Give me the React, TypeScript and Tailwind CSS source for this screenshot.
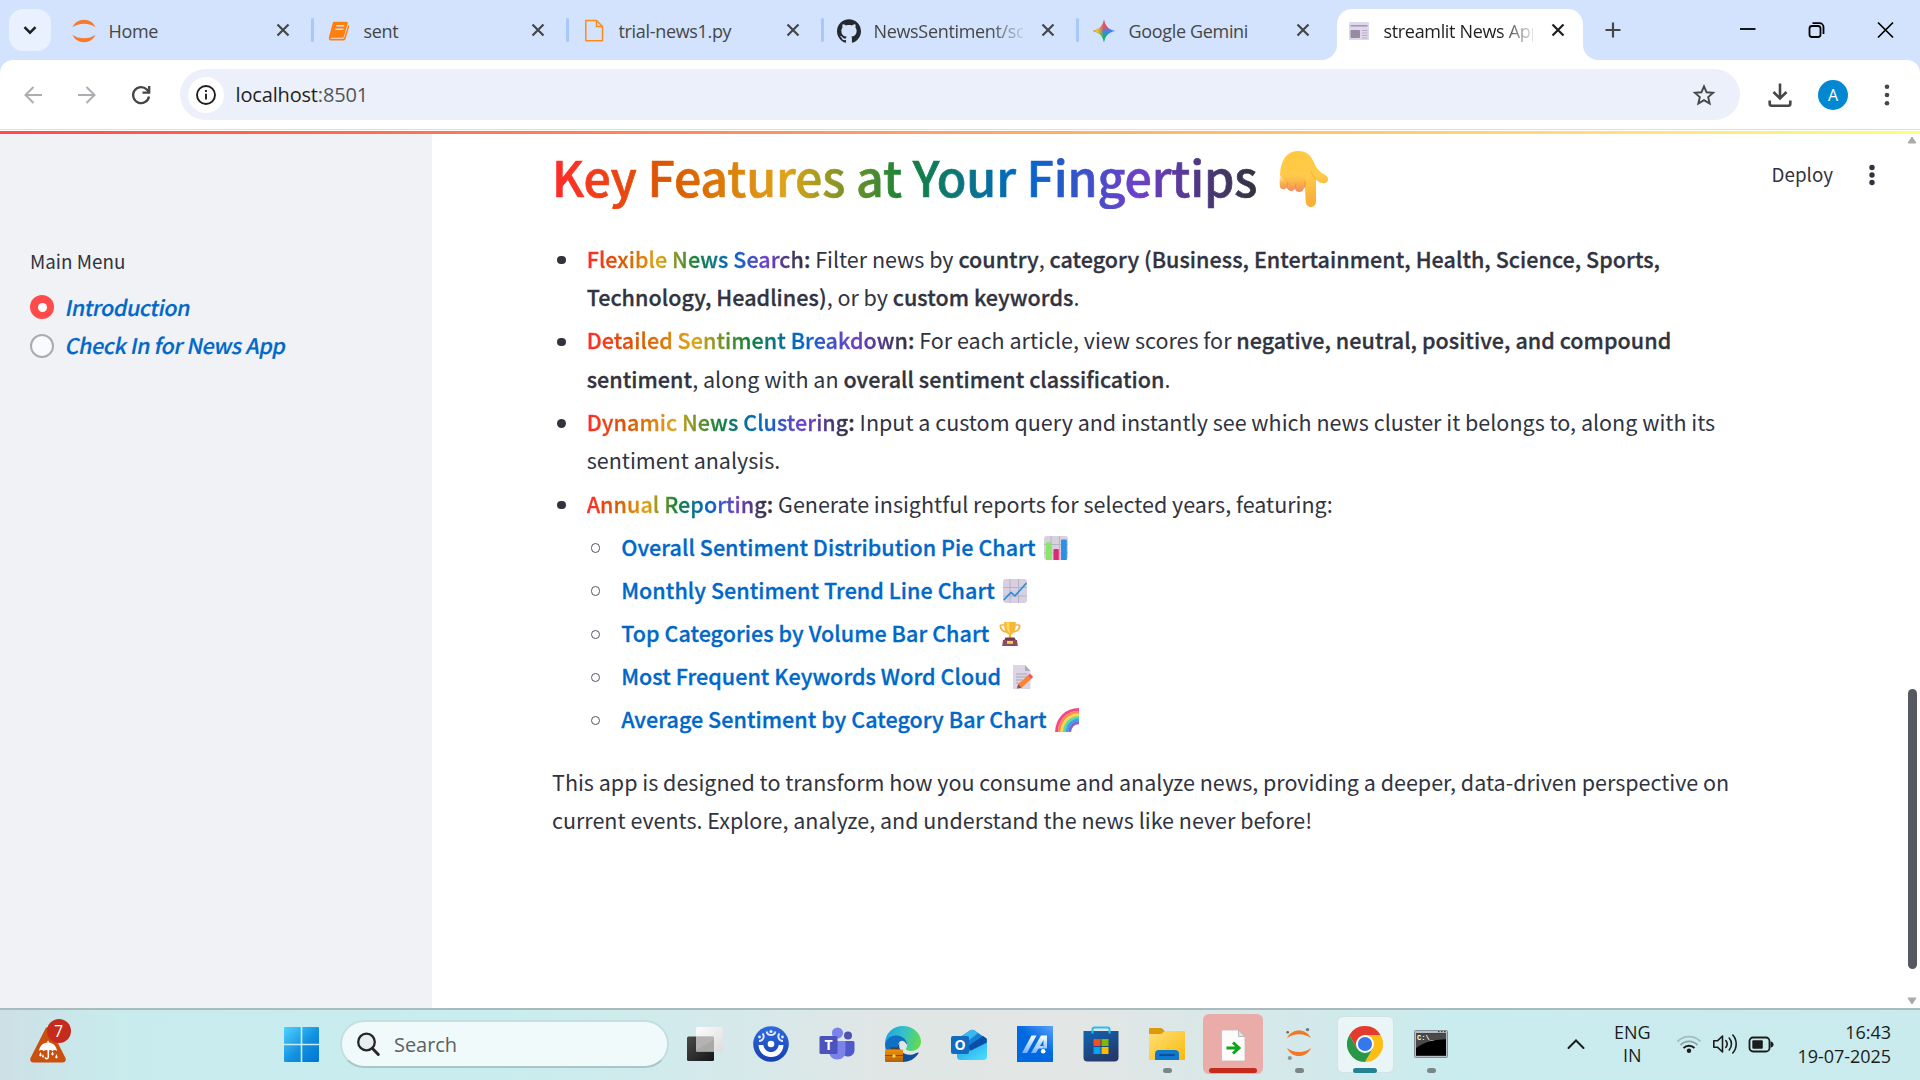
import React from "react";
import type { ReactNode } from "react";
import { SiGithub } from "react-icons/si";

/* ---------- favicons ---------- */

function JupyterArcs({ dots = false }: { dots?: boolean }) {
  return dots ? (
    <svg width="26" height="34" viewBox="0 0 26 34">
      <path d="M1 11C3.500 6 8 3.500 13 3.500S22.500 6 25 11C21.500 8.500 17.500 7.200 13 7.200S4.500 8.500 1 11Z" fill="#f37726" />
      <path d="M1 21C3.500 26.500 8 29 13 29S22.500 26.500 25 21C21.500 23.700 17.500 25 13 25S4.500 23.700 1 21Z" fill="#f37726" />
      <circle cx="1.700" cy="5.300" r="1.300" fill="#616262" />
      <circle cx="21.500" cy="2.600" r="1.700" fill="#767677" />
      <circle cx="3.800" cy="31" r="2.100" fill="#949494" />
    </svg>
  ) : (
    <svg width="24" height="24" viewBox="0 0 24 24">
      <path d="M.6 8.300C2.500 3.600 6.700 .8 12 .8s9.500 2.800 11.400 7.500C20.500 6 16.500 4.700 12 4.700S3.500 6 .6 8.300Z" fill="#f8792a" />
      <path d="M.6 15.700c1.900 4.700 6.100 7.500 11.400 7.500s9.500-2.800 11.400-7.500C20.500 18 16.500 19.300 12 19.300S3.500 18 .6 15.700Z" fill="#f8792a" />
    </svg>
  );
}

function NotebookIcon() {
  return (
    <svg width="22" height="20" viewBox="0 0 22 20">
      <path d="M6 .8h12.500c1 0 1.500.8 1.200 1.700l-3.800 13c-.3.800-1 1.300-1.800 1.300H3.800c-.9 0-1.300.500-1.100 1h11.700c1 0 1.600-.4 1.900-1.300L20.300 4c.8.400 1 1.100.8 1.900l-3.600 12c-.4 1-1.300 1.600-2.300 1.600H3C1.200 19.500.3 17.800 1 15.800L4.800 2C5 1.200 5.300.8 6 .8Z" fill="#ff7f0e" />
      <path d="M8.200 4.800h8M7.300 8.200h8" stroke="#d3e3fd" strokeWidth="1.400" />
    </svg>
  );
}

function FileIcon() {
  return (
    <svg width="20" height="24" viewBox="0 0 20 24" fill="none" stroke="#ff8c1a" strokeWidth="1.500">
      <path d="M1.800 1.500h10.700l6 6v14.300H1.800Z" strokeLinejoin="round" />
      <path d="M12.500 1.500v6h6" />
    </svg>
  );
}

function GeminiIcon() {
  return (
    <svg width="24" height="24" viewBox="0 0 24 24">
      <defs>
        <linearGradient id="gemTop" x1="0.450" y1="0" x2="0.580" y2="0.560">
          <stop offset="0.500" stopColor="#f4504c" />
          <stop offset="1" stopColor="#f4504c" stopOpacity="0" />
        </linearGradient>
        <linearGradient id="gemLeft" x1="0" y1="0.500" x2="0.480" y2="0.500">
          <stop offset="0.450" stopColor="#fbc10e" />
          <stop offset="1" stopColor="#fbc10e" stopOpacity="0" />
        </linearGradient>
        <linearGradient id="gemBottom" x1="0.450" y1="1" x2="0.560" y2="0.500">
          <stop offset="0.450" stopColor="#14b85c" />
          <stop offset="1" stopColor="#14b85c" stopOpacity="0" />
        </linearGradient>
      </defs>
      {["#3186ff", "url(#gemBottom)", "url(#gemTop)", "url(#gemLeft)"].map((fill) => (
        <path key={fill} d="M12 .8c1 6 4.500 10 11.200 11.200C16.500 13.200 13 17.200 12 23.200 11 17.200 7.500 13.200.8 12 7.500 10.800 11 6.800 12 .8Z" fill={fill} />
      ))}
    </svg>
  );
}

function NewspaperIcon() {
  return (
    <svg width="20" height="18" viewBox="0 0 20 18">
      <rect width="20" height="18" rx="1" fill="#e0d7ea" />
      <path d="M1.500 3.800h17" stroke="#a599b1" strokeWidth="1.600" />
      <rect x="1.500" y="8" width="9.500" height="8" rx="1" fill="#968ba3" />
      <path d="M13 8.500h5.500M13 11h5.500M13 13.500h5.500M13 16h5.500" stroke="#b7abc6" strokeWidth="1" />
    </svg>
  );
}

/* ---------- browser chrome ---------- */

type TabInfo = { title: string; icon: ReactNode; active?: boolean; fade?: boolean };

const tabs: TabInfo[] = [
  { title: "Home", icon: <JupyterArcs /> },
  { title: "sent", icon: <NotebookIcon /> },
  { title: "trial-news1.py", icon: <FileIcon /> },
  { title: "NewsSentiment/scr", icon: <SiGithub size={24} color="#24292f" />, fade: true },
  { title: "Google Gemini", icon: <GeminiIcon /> },
  { title: "streamlit News App", icon: <NewspaperIcon />, active: true, fade: true },
];

function CloseIcon({ color }: { color: string }) {
  return (
    <svg width="20" height="20" viewBox="0 0 20 20" fill="none" stroke={color} strokeWidth="2.200">
      <path d="M4.500 4.500l11 11M15.500 4.500l-11 11" />
    </svg>
  );
}

function Tab({ title, icon, active, fade }: TabInfo) {
  return (
    <div className="relative flex h-[60px] w-[255px] shrink-0 items-center">
      {active && (
        <>
          <div className="absolute top-[9px] left-[3px] h-[51px] w-[246px] rounded-t-[15px] bg-white" />
          <svg className="absolute bottom-0 -left-[12px]" width="15" height="15" viewBox="0 0 15 15">
            <path d="M15 0v15H0C8 15 15 8 15 0Z" fill="#fff" />
          </svg>
          <svg className="absolute bottom-0 left-[249px]" width="15" height="15" viewBox="0 0 15 15">
            <path d="M0 0v15h15C7 15 0 8 0 0Z" fill="#fff" />
          </svg>
        </>
      )}
      <span className="relative ml-[13px] flex w-6 justify-center pt-px">{icon}</span>
      <span
        className={
          "relative ml-[12.500px] w-[149px] overflow-hidden pt-px text-[18px] leading-7 tracking-[-0.330px] whitespace-nowrap " +
          (active ? "text-[#1f1f1f] " : "text-[#454746] ") +
          (fade ? "[mask-image:linear-gradient(to_right,black_78%,transparent_103%)]" : "")
        }
      >
        {title}
      </span>
      <span className="relative ml-[15px]">
        <CloseIcon color={active ? "#1f1f1f" : "#454746"} />
      </span>
      {!active && title !== "Google Gemini" && <span className="ml-auto h-6 w-[3px] rounded-full bg-[#a8c7fa]" />}
    </div>
  );
}

function TabStrip() {
  return (
    <div className="flex h-[60px] shrink-0 items-center bg-[#d3e3fd]">
      <div className="ml-[9px] flex h-[42px] w-[42px] shrink-0 items-center justify-center rounded-[14px] bg-[#e9f1fe]">
        <svg width="16" height="16" viewBox="0 0 16 16" fill="none" stroke="#1f1f1f" strokeWidth="2.500">
          <path d="M2.500 5.200L8 10.700l5.500-5.500" />
        </svg>
      </div>
      <div className="ml-2 flex">
        {tabs.map((t) => (
          <Tab key={t.title} {...t} />
        ))}
      </div>
      <svg className="ml-[13.500px]" width="20" height="20" viewBox="0 0 20 20" stroke="#454746" strokeWidth="2.200">
        <path d="M10 2.500v15M2.500 10h15" />
      </svg>
      <div className="ml-auto flex items-center gap-[46px] pr-[25px]">
        <svg width="20" height="20" viewBox="0 0 20 20" stroke="#000" strokeWidth="1.800">
          <path d="M1 9h15.500" />
        </svg>
        <svg width="24" height="20" viewBox="0 0 24 20" fill="none" stroke="#000" strokeWidth="1.800">
          <rect x="4.500" y="6" width="11" height="11" rx="2.500" />
          <path d="M7.500 3.200h7a4 4 0 0 1 4 4V14" />
        </svg>
        <svg width="20" height="20" viewBox="0 0 20 20" stroke="#000" strokeWidth="1.700">
          <path d="M3 2.500l15 15M18 2.500l-15 15" />
        </svg>
      </div>
    </div>
  );
}

function Toolbar() {
  return (
    <div className="h-[69px] shrink-0 bg-[#d3e3fd]">
      <div className="flex h-[69px] items-center rounded-t-[13px] bg-white">
        <svg className="ml-[21px]" width="24" height="24" viewBox="0 0 24 24" fill="none" stroke="#abadb0" strokeWidth="2">
          <path d="M21 12H5M12.500 4L4.500 12l8 8" />
        </svg>
        <svg className="ml-[29.500px]" width="24" height="24" viewBox="0 0 24 24" fill="none" stroke="#abadb0" strokeWidth="2">
          <path d="M3 12h16M11.500 4l8 8-8 8" />
        </svg>
        <svg className="ml-[30.500px]" width="24" height="24" viewBox="0 0 24 24" fill="none" stroke="#454746" strokeWidth="2.300">
          <path d="M20 13.500A8 8 0 1 1 17.800 6.500L20 9" />
          <path d="M20.200 3v6.700h-6.700" />
        </svg>
        <div className="ml-[27px] flex h-[51px] w-[1560px] items-center rounded-full bg-[#ecf0fa]">
          <div className="ml-[8px] flex h-9 w-9 items-center justify-center rounded-full bg-white">
            <svg width="22" height="22" viewBox="0 0 22 22" fill="none" stroke="#1f1f1f" strokeWidth="1.900">
              <circle cx="11" cy="11" r="9" />
              <path d="M11 9.800v5.700M11 6v2" />
            </svg>
          </div>
          <span className="ml-[11.500px] text-[20px] leading-7 tracking-[-0.160px] text-[#1f1f1f]">
            localhost<span className="text-[#51555a]">:8501</span>
          </span>
          <svg className="mr-[24px] ml-auto" width="24" height="24" viewBox="0 0 24 24" fill="none" stroke="#454746" strokeWidth="1.900">
            <path d="M12 3.300l2.600 6 6.500.55-4.900 4.300 1.450 6.350L12 17.100 6.350 20.500 7.800 14.150 2.900 9.850l6.500-.55Z" />
          </svg>
        </div>
        <svg className="ml-7" width="24" height="26" viewBox="0 0 24 26" fill="none" stroke="#454746" strokeWidth="2.600">
          <path d="M12 1.500v14M5.500 10L12 16.500 18.500 10M1.700 18.500v3.300a2 2 0 0 0 2 2h16.600a2 2 0 0 0 2-2v-3.300" />
        </svg>
        <div className="ml-[26px] flex h-[30px] w-[30px] items-center justify-center rounded-full bg-[#0288d1] text-[16px] text-white">A</div>
        <svg className="ml-[33px]" width="12" height="24" viewBox="0 0 12 24" fill="#454746">
          <circle cx="6" cy="3.800" r="2.300" />
          <circle cx="6" cy="12" r="2.300" />
          <circle cx="6" cy="20.200" r="2.300" />
        </svg>
      </div>
    </div>
  );
}

/* ---------- emoji drawings ---------- */

function PointingDown() {
  return (
    <svg width="50" height="58" viewBox="0 0 50 58">
      <defs>
        <linearGradient id="handFill" x1="0" y1="0" x2="0.200" y2="1">
          <stop offset="0" stopColor="#ffc83d" />
          <stop offset="0.550" stopColor="#ffcb4c" />
          <stop offset="1" stopColor="#f9ae35" />
        </linearGradient>
        <linearGradient id="fingers" x1="0" y1="0" x2="0" y2="1">
          <stop offset="0" stopColor="#ffc94a" stopOpacity="0" />
          <stop offset="0.550" stopColor="#fbb14a" />
          <stop offset="1" stopColor="#f08a62" />
        </linearGradient>
      </defs>
      <path d="M1 25C1.500 10 8 1 18.500 1c9.500 0 13.500 4.500 17 12.500 2.300 5.300 4.500 8 10 11 4 2.200 4.500 5.500 2.500 7.500-2.300 2.300-7 1.500-11-2.300V51c0 3.500-2 6-5 6s-5.300-2.500-5.300-6L26 36H9Z" fill="url(#handFill)" />
      <path d="M1 24c-.3 5-.6 10.500.1 13.300.8 2.600 5.600 2.600 6.700.2.700 4 6.700 4.700 8 1.200 1.200 4.200 8 4.500 8.700.3l1.900-2V22Z" fill="url(#fingers)" />
      <path d="M9 31.500l-1.400 6.300M17.200 33l-1.600 6M26 31v6" stroke="#e98a4d" strokeWidth="1" opacity=".7" />
      <path d="M37 29.500c-2.500-2.300-4-5-5-8" stroke="#f3a52e" strokeWidth="1.200" fill="none" opacity=".55" />
    </svg>
  );
}

function ChartGrid({ children }: { children: ReactNode }) {
  return (
    <svg width="24" height="24" viewBox="0 0 24 24">
      <rect width="24" height="24" rx="3" fill="#d7d0e0" />
      <path d="M7 0v24M15.500 0v24M0 8.500h24M0 17h24" stroke="#bab1c7" strokeWidth="1" />
      {children}
    </svg>
  );
}

function BarChartEmoji() {
  return (
    <ChartGrid>
      <path d="M2 7.500a1.200 1.200 0 0 1 1.200-1.200h2.900a1.200 1.200 0 0 1 1.200 1.200V24H2Z" fill="#8ae468" />
      <path d="M9.500 14.200a1.200 1.200 0 0 1 1.200-1.200h2.900a1.200 1.200 0 0 1 1.200 1.200V24H9.500Z" fill="#dc2a72" />
      <path d="M17 4.700a1.200 1.200 0 0 1 1.200-1.200h3.400a1.200 1.200 0 0 1 1.200 1.200V24H17Z" fill="#2d8fe3" />
    </ChartGrid>
  );
}

function LineChartEmoji() {
  return (
    <ChartGrid>
      <path d="M.8 21L8 13.500l4 3.300L23.500 4" fill="none" stroke="#2c8fd8" strokeWidth="1.700" />
    </ChartGrid>
  );
}

function TrophyEmoji() {
  return (
    <svg width="24" height="24" viewBox="0 0 24 24">
      <path d="M7 3H3.500c-.8 0-1.200.5-1.100 1.300C2.800 7.500 4.500 9.300 8.500 10M17 3h3.500c.8 0 1.200.5 1.100 1.300-.4 3.200-2.100 5-6.100 5.700" fill="none" stroke="#f3b13c" strokeWidth="1.700" />
      <path d="M6.200 0h11.600c.4 6.500-1.200 11.300-4.600 12.500V16h-2.400v-3.500C7.400 11.300 5.800 6.500 6.200 0Z" fill="#f9b73a" />
      <path d="M8.500.5h3c-.5 4-.2 7.500 1 11C9.500 10 8.300 6 8.500.5Z" fill="#ffd95a" />
      <path d="M7.500 15.500h9l1.500 3H6Z" fill="#6d3a48" />
      <path d="M5 18h14l.8 6H4.200Z" fill="#8a4d5c" />
      <rect x="9" y="19" width="6" height="2.800" fill="#f7cf5b" />
    </svg>
  );
}

function MemoEmoji() {
  return (
    <svg width="24" height="24" viewBox="0 0 24 24">
      <path d="M3 0h12l5.500 6V24H3Z" fill="#dcd5e5" />
      <path d="M15 0v6h5.500Z" fill="#b3a9c0" />
      <path d="M6 9h11M6 12h11M6 15h7M6 18h5" stroke="#aca1ba" strokeWidth="1.100" />
      <path d="M7 23.500l1.200-4.300 9.300-8.400 3.300 3.400-9.300 8.600Z" fill="#fc8333" />
      <path d="M7 23.500l1.200-4.300 3.300 3.600Z" fill="#7c5560" />
      <path d="M17.500 10.800l1.700-1.600c.5-.4 1-.4 1.400 0l2 2.100c.4.500.4 1 0 1.400l-1.800 1.500Z" fill="#f85a4a" />
    </svg>
  );
}

function RainbowEmoji() {
  return (
    <svg width="24" height="24" viewBox="0 0 24 24" fill="none" strokeWidth="2.900">
      <path d="M1.500 24C2 11 11 1.500 24 1.500" stroke="#f5468b" />
      <path d="M4.200 24C4.700 12.500 12.500 4.200 24 4.200" stroke="#ff8a4d" />
      <path d="M6.800 24C7.300 14 14 6.800 24 6.800" stroke="#fdd454" />
      <path d="M9.400 24C9.900 15.500 15.500 9.400 24 9.400" stroke="#5fd99a" />
      <path d="M12 24C12.500 17 17 12 24 12" stroke="#3ea0ec" />
      <path d="M14.700 24C15.200 18.500 18.500 14.700 24 14.700" stroke="#8566d0" />
    </svg>
  );
}

/* ---------- streamlit page ---------- */

const rainbow =
  "bg-[linear-gradient(to_right,#ff2b2b,#d95a00,#dfa418,#158237,#0068c9,#6f3fc8,#31333f)] bg-clip-text text-transparent";

function B({ children }: { children: ReactNode }) {
  return <strong className="font-medium tracking-[0.050px] [-webkit-text-stroke:0.300px_currentColor]">{children}</strong>;
}

function Rainbow({ children }: { children: ReactNode }) {
  return (
    <strong className="font-medium tracking-[0.050px] [-webkit-text-stroke:0.300px_currentColor]">
      <span className={rainbow}>{children}</span>:
    </strong>
  );
}

function Line({ children }: { children: ReactNode }) {
  return <div className="h-[38.400px] leading-[38.400px] whitespace-nowrap">{children}</div>;
}

function Bullet({ children }: { children: ReactNode }) {
  return (
    <li className="flex">
      <span className="mt-[16.200px] mr-[21px] ml-[5.200px] h-[8.500px] w-[8.500px] shrink-0 rounded-full bg-[#31333f]" />
      <div>{children}</div>
    </li>
  );
}

function Report({ label, emoji }: { label: string; emoji: ReactNode }) {
  return (
    <li className="flex">
      <span className="mt-[15.500px] mr-[21px] ml-[4px] h-[9.500px] w-[9.500px] shrink-0 rounded-full border-[1.500px] border-[#53555f]" />
      <div className="flex h-[38.400px] leading-[38.400px] whitespace-nowrap text-[#0068c9]">
        <B>{label}</B>
        <span className="ml-[8.500px] flex h-[38.400px] items-center pt-[1.500px]">{emoji}</span>
      </div>
    </li>
  );
}

function Radio({ label, checked, spacing }: { label: string; checked?: boolean; spacing: string }) {
  return (
    <div className="flex h-[38.400px] items-center">
      {checked ? (
        <span className="flex h-6 w-6 items-center justify-center rounded-full bg-[#ff4b4b]">
          <span className="h-[9px] w-[9px] rounded-full bg-white" />
        </span>
      ) : (
        <span className="h-6 w-6 rounded-full border-2 border-[#a9abb3] bg-[#f9fafc]" />
      )}
      <span className={"ml-[11px] inline-block origin-[50%_65%] -skew-x-[11deg] text-[21.500px] leading-[38.400px] font-medium text-[#0068c9] [-webkit-text-stroke:0.200px_currentColor] " + spacing}>
        {label}
      </span>
    </div>
  );
}

function Sidebar() {
  return (
    <aside className="h-full w-[432px] shrink-0 bg-[#f0f2f6] pl-[30px] text-[#31333f]">
      <div className="pt-[111px] text-[18.800px] leading-[31px] tracking-[0.020px]">Main Menu</div>
      <div className="pt-[12px]">
        <Radio label="Introduction" checked spacing="tracking-[-0.400px]" />
        <Radio label="Check In for News App" spacing="tracking-[-0.380px]" />
      </div>
    </aside>
  );
}

function Page() {
  return (
    <main className="relative h-full flex-1 overflow-hidden bg-white pl-[120px] text-[21.500px] text-[#31333f]">
      <div className="absolute top-[24px] right-[25px] flex items-center">
        <span className="text-[18.800px] leading-[31px]">Deploy</span>
        <svg className="mt-[3px] ml-[33px]" width="13" height="24" viewBox="0 0 13 24" fill="#31333f">
          <circle cx="6" cy="4.500" r="2.700" />
          <circle cx="6" cy="12" r="2.700" />
          <circle cx="6" cy="19.500" r="2.700" />
        </svg>
      </div>

      <h2 className="mt-[10px] flex h-[64.800px] items-center text-[48.300px] leading-[64.800px] font-medium tracking-[-0.130px] [-webkit-text-stroke:0.700px_currentColor]">
        <span className={rainbow}>Key Features at Your Fingertips</span>
        <span className="ml-[22px] pt-[5px]">
          <PointingDown />
        </span>
      </h2>

      <ul className="mt-[31px] flex flex-col gap-[4.800px]">
        <Bullet>
          <Line>
            <Rainbow>Flexible News Search</Rainbow> Filter news by <B>country</B>, <B>category (Business, Entertainment, Health, Science, Sports,</B>
          </Line>
          <Line>
            <B>Technology, Headlines)</B>, or by <B>custom keywords</B>.
          </Line>
        </Bullet>
        <Bullet>
          <Line>
            <Rainbow>Detailed Sentiment Breakdown</Rainbow> For each article, view scores for <B>negative, neutral, positive, and compound</B>
          </Line>
          <Line>
            <B>sentiment</B>, along with an <B>overall sentiment classification</B>.
          </Line>
        </Bullet>
        <Bullet>
          <Line>
            <Rainbow>Dynamic News Clustering</Rainbow> Input a custom query and instantly see which news cluster it belongs to, along with its
          </Line>
          <Line>sentiment analysis.</Line>
        </Bullet>
        <Bullet>
          <Line>
            <Rainbow>Annual Reporting</Rainbow> Generate insightful reports for selected years, featuring:
          </Line>
          <ul className="mt-[4.800px] flex flex-col gap-[4.800px]">
            <Report label="Overall Sentiment Distribution Pie Chart" emoji={<BarChartEmoji />} />
            <Report label="Monthly Sentiment Trend Line Chart" emoji={<LineChartEmoji />} />
            <Report label="Top Categories by Volume Bar Chart" emoji={<TrophyEmoji />} />
            <Report label="Most Frequent Keywords Word Cloud" emoji={<MemoEmoji />} />
            <Report label="Average Sentiment by Category Bar Chart" emoji={<RainbowEmoji />} />
          </ul>
        </Bullet>
      </ul>

      <div className="mt-6">
        <Line>This app is designed to transform how you consume and analyze news, providing a deeper, data-driven perspective on</Line>
        <Line>current events. Explore, analyze, and understand the news like never before!</Line>
      </div>
    </main>
  );
}

function Scrollbar() {
  return (
    <div className="flex h-full w-4 shrink-0 flex-col items-center bg-white">
      <svg className="mt-[2px]" width="10" height="8" viewBox="0 0 10 8">
        <path d="M5 1L9 7H1Z" fill="#a9a9ac" stroke="#a9a9ac" strokeLinejoin="round" />
      </svg>
      <div className="mt-[544.500px] h-[280px] w-[9px] rounded-full bg-[#56595f]" />
      <svg className="mt-[28.500px]" width="10" height="8" viewBox="0 0 10 8">
        <path d="M5 7L9 1H1Z" fill="#a9a9ac" stroke="#a9a9ac" strokeLinejoin="round" />
      </svg>
    </div>
  );
}

/* ---------- taskbar ---------- */

function WeatherAlert() {
  return (
    <div className="relative ml-[30px] h-[42px] w-[44px]">
      <svg className="absolute top-[3px] left-0" width="37" height="37" viewBox="0 0 37 37">
        <path d="M15.500 2.500c1-2 4-2 5 0L35.500 32c1 2.500-.5 4.500-3 4.500h-29C1 36.500-.5 34.500.5 32Z" fill="#c9500e" />
        <path d="M9 25c.5-5 4-8 8.500-8.500v-1.800h1.200v1.800C23.500 17 26.500 20.500 27 25c-1.500-1.300-3-1.300-4.500 0-1.300-1.300-2.800-1.300-4.200 0-1.500-1.300-3-1.300-4.500 0-1.600-1.300-3.200-1.300-4.800 0Z" fill="#fff" />
        <path d="M18.300 24v7c0 2.200-3 2.200-3 .2" fill="none" stroke="#fff" strokeWidth="1.500" />
        <path d="M10.500 26l1 2.500a1.200 1.200 0 1 1-2 0ZM13 28l.8 2a1 1 0 1 1-1.600 0ZM22.500 25.500l1 2a1.200 1.200 0 1 1-2 0ZM26.500 28l.9 2.500a1.200 1.200 0 1 1-1.900 0Z" fill="#fff" />
      </svg>
      <span className="absolute -top-[4px] left-[16.500px] flex h-6 w-6 items-center justify-center rounded-full bg-[#c42b1c] text-[16px] leading-none text-white">7</span>
    </div>
  );
}

function WindowsLogo() {
  return (
    <svg className="ml-[210px]" width="35" height="35" viewBox="0 0 35 35">
      <defs>
        <linearGradient id="winFill" x1="0" y1="0" x2="35" y2="35" gradientUnits="userSpaceOnUse">
          <stop offset="0" stopColor="#4fd2ff" />
          <stop offset="0.550" stopColor="#1290e0" />
          <stop offset="1" stopColor="#0074d4" />
        </linearGradient>
      </defs>
      <path d="M1 0h15.700v16.700H0V1a1 1 0 0 1 1-1ZM18.300 0H34a1 1 0 0 1 1 1v15.700H18.300ZM0 18.300h16.700V35H1a1 1 0 0 1-1-1ZM18.300 18.300H35V34a1 1 0 0 1-1 1H18.300Z" fill="url(#winFill)" />
    </svg>
  );
}

function TaskViewIcon() {
  return (
    <svg width="36" height="36" viewBox="0 0 36 36">
      <defs>
        <linearGradient id="tvDark" x1="0" y1="0" x2="1" y2="1">
          <stop offset="0" stopColor="#4a4a4a" />
          <stop offset="1" stopColor="#151515" />
        </linearGradient>
        <linearGradient id="tvLight" x1="0" y1="0" x2="1" y2="1">
          <stop offset="0" stopColor="#fdfdfd" />
          <stop offset="1" stopColor="#dcdcdc" />
        </linearGradient>
      </defs>
      <rect x="0" y="10.500" width="27" height="24.500" rx="1.500" fill="url(#tvDark)" />
      <rect x="9" y="1" width="27" height="24.500" rx="1.500" fill="url(#tvLight)" />
      <path d="M9 10.500h16.500a1.500 1.500 0 0 1 1.500 1.500v13.500H9Z" fill="#a9a9a9" />
      <path d="M9 10.500h18v3L9 24Z" fill="#bdbdbd" opacity=".5" />
    </svg>
  );
}

function SupportIcon() {
  return (
    <svg width="36" height="36" viewBox="0 0 36 36">
      <defs>
        <linearGradient id="supFill" x1="0" y1="0" x2="0" y2="1">
          <stop offset="0" stopColor="#2d6be0" />
          <stop offset="1" stopColor="#173fb0" />
        </linearGradient>
      </defs>
      <circle cx="18" cy="18" r="17.800" fill="url(#supFill)" />
      <path d="M5.500 19h4.800c.8 4.300 3.700 7 7.700 7s6.900-2.700 7.700-7h4.800C30 26.500 25 31 18 31S6 26.500 5.500 19Z" fill="#fff" />
      <circle cx="18" cy="18" r="3.300" fill="#fff" />
      <g fill="none" stroke="#dfe9ff" strokeWidth="1.900">
        <path d="M13.600 5.500a4.500 4.500 0 0 0 8.800 0" />
        <path d="M9.500 7.500a4.500 4.500 0 0 1-3.500 7.500" />
        <path d="M26.500 7.500a4.500 4.500 0 0 0 3.500 7.500" />
      </g>
      <g fill="#dfe9ff">
        <circle cx="18" cy="5.500" r="1.600" />
        <circle cx="6.500" cy="11" r="1.400" />
        <circle cx="29.500" cy="11" r="1.400" />
      </g>
    </svg>
  );
}

function TeamsIcon() {
  return (
    <span className="relative">
      <svg width="36" height="34" viewBox="0 0 36 34">
        <circle cx="29" cy="8.500" r="4" fill="#4f52b2" />
        <circle cx="18.500" cy="6" r="5.600" fill="#7b83eb" />
        <path d="M23 14h11a1.500 1.500 0 0 1 1.500 1.500V23c0 4-3 6.500-6.500 6.500S22 27 22 23Z" fill="#5059c9" />
        <path d="M10 14h16.500v10c0 5-3.500 8.500-8.200 8.500S10 29 10 24Z" fill="#7b83eb" />
        <rect x=".5" y="9" width="18" height="18" rx="1.500" fill="#4b53bc" />
      </svg>
      <span className="absolute top-[9px] left-[.5px] w-[18px] text-center text-[14px] leading-[18px] font-bold text-white">T</span>
    </span>
  );
}

function EdgeIcon() {
  return (
    <svg width="36" height="36" viewBox="0 0 36 36">
      <defs>
        <linearGradient id="edgeTop" x1="0" y1="0.300" x2="1" y2="0.500">
          <stop offset="0" stopColor="#1fa2e2" />
          <stop offset="0.500" stopColor="#35c1c8" />
          <stop offset="1" stopColor="#62dc4c" />
        </linearGradient>
        <linearGradient id="edgeCase" x1="0" y1="0" x2="0" y2="1">
          <stop offset="0" stopColor="#f0920c" />
          <stop offset="1" stopColor="#b4600a" />
        </linearGradient>
      </defs>
      <path d="M0 18C0 7 8 0 18 0s18 7.500 18 15.500c0 6-5 9.500-9.500 9.500-3.500 0-6-1-5.500-2.500.3-.8 1.300-1.500 1-4C21.500 14 17 10 11 10 5 10 1 14 0 18Z" fill="url(#edgeTop)" />
      <path d="M0 18c1-4.500 5-8.500 11-8.500 5.500 0 10 3 11 8l-.5 1C20 15.500 17 13.500 14.500 16c-3.500 4-2 12 5 17l-3 3C7 36 0 28.500 0 18Z" fill="#0f6fc5" />
      <path d="M14.500 17c-2 7 5 13.500 13 11.500 2.500-.6 4.500-1.800 5.500-2 .7 0 .8.500.4 1.100C29.500 33.500 24 36 18 36c-6-3-9-13-3.500-19Z" fill="#114f96" />
      <path d="M6.500 23v-1h5v1" fill="none" stroke="#5d3a10" strokeWidth="1.500" />
      <rect x="0" y="23.500" width="18" height="12.500" rx="1" fill="url(#edgeCase)" />
      <path d="M0 29.500h18" stroke="#8e4a06" strokeWidth="1" />
      <circle cx="9" cy="30" r="1.700" fill="#ffd24a" />
    </svg>
  );
}

function OutlookIcon() {
  return (
    <span className="relative">
      <svg width="36" height="34" viewBox="0 0 36 34">
        <defs>
          <linearGradient id="outFront" x1="0" y1="0" x2="1" y2="1">
            <stop offset="0" stopColor="#1f9de6" />
            <stop offset="1" stopColor="#4de0ff" />
          </linearGradient>
        </defs>
        <path d="M6 12L19 3.500c1.500-1 3-1 4.500 0L36 12v16H6Z" fill="#1580d6" />
        <path d="M14 7L19 3.500c1.500-1 3-1 4.500 0L27 6 12 18 7 12Z" fill="#3ab8f2" />
        <path d="M17 19L32 9l3.500 2.500v5L20 25Z" fill="#0b4ea8" />
        <path d="M36 15.500v14a3.500 3.500 0 0 1-3.500 3.500H9.500A3.500 3.500 0 0 1 6 29.500V25L20 23.500Z" fill="url(#outFront)" />
        <rect x="0" y="9" width="18" height="18" rx="2" fill="#0f6cc0" />
      </svg>
      <span className="absolute top-[9px] left-0 w-[18px] text-center text-[14px] leading-[18px] font-bold text-white">O</span>
    </span>
  );
}

function MyAsusIcon() {
  return (
    <svg width="36" height="36" viewBox="0 0 36 36">
      <defs>
        <linearGradient id="asusBg" x1="0.600" y1="0.500" x2="1" y2="0">
          <stop offset="0" stopColor="#0069e0" />
          <stop offset="1" stopColor="#5aa2fb" />
        </linearGradient>
        <linearGradient id="asusInk" x1="0" y1="1" x2="0" y2="0">
          <stop offset="0" stopColor="#6fb0ff" />
          <stop offset="1" stopColor="#fff" />
        </linearGradient>
      </defs>
      <rect width="36" height="36" fill="url(#asusBg)" />
      <path d="M5 27L14.500 9.500H19.500L10 27ZM14 27L24 9.500H30V22.500H26.500V14L19 27Z" fill="url(#asusInk)" />
      <path d="M20 20h6.500v2.500h-8Z" fill="#b8d6ff" />
      <circle cx="26.200" cy="25.300" r="2.300" fill="#fff" />
    </svg>
  );
}

function StoreIcon() {
  return (
    <svg width="36" height="36" viewBox="0 0 36 36">
      <defs>
        <linearGradient id="storeBg" x1="0" y1="0" x2="0.500" y2="1">
          <stop offset="0" stopColor="#0f64b4" />
          <stop offset="1" stopColor="#243a6a" />
        </linearGradient>
      </defs>
      <path d="M9.500 8V3.200A1.700 1.700 0 0 1 11.200 1.500H24.800A1.700 1.700 0 0 1 26.500 3.200V8" fill="none" stroke="#29bdf6" strokeWidth="2" />
      <path d="M.5 5h35v26.500a4 4 0 0 1-4 4h-27a4 4 0 0 1-4-4Z" fill="url(#storeBg)" />
      <path d="M9.500 5v2.500M26.500 5v2.500" stroke="#29bdf6" strokeWidth="2" />
      <path d="M10.500 13h7v7h-7Z" fill="#f25022" />
      <path d="M18.500 13h7v7h-7Z" fill="#7fba00" />
      <path d="M10.500 21h7v7h-7Z" fill="#00a4ef" />
      <path d="M18.500 21h7v7h-7Z" fill="#ffb900" />
    </svg>
  );
}

function ExplorerIcon() {
  return (
    <svg width="36" height="34" viewBox="0 0 36 34">
      <defs>
        <linearGradient id="folderFront" x1="0" y1="0" x2="1" y2="1">
          <stop offset="0" stopColor="#ffe07a" />
          <stop offset="1" stopColor="#fbb90c" />
        </linearGradient>
      </defs>
      <path d="M1 1h10.500c1 0 1.700.4 2.300 1L16 4.500V9H0V2a1 1 0 0 1 1-1Z" fill="#dc9a07" />
      <path d="M0 7h11c1 0 1.800-.4 2.500-1l1-1c.7-.7 1.500-1 2.500-1h18a1 1 0 0 1 1 1v28H0Z" fill="url(#folderFront)" />
      <path d="M6 33v-6a4 4 0 0 1 4-4h16a4 4 0 0 1 4 4v6Z" fill="#0f78cf" />
      <path d="M11 28h14" stroke="#0a4f94" strokeWidth="1.800" strokeLinecap="round" />
    </svg>
  );
}

function FileArrowIcon() {
  return (
    <svg width="36" height="36" viewBox="0 0 36 36">
      <path d="M6.500 4h17l6.500 6.500V35H6.500Z" fill="#fcfcfc" stroke="#c9b6b4" strokeWidth=".8" />
      <path d="M23.500 4v6.500H30Z" fill="#e2e2e2" stroke="#a9a9a9" strokeWidth=".8" />
      <path d="M11.500 22h12M18 16.500l6 5.500-6 5.500" fill="none" stroke="#09a51b" strokeWidth="3" />
    </svg>
  );
}

function ChromeIcon() {
  return (
    <svg width="36" height="36" viewBox="0 0 36 36">
      <path d="M18 9H33.590A18 18 0 0 1 18 36L25.790 22.500Z" fill="#fdbd14" />
      <path d="M2.410 9A18 18 0 0 0 18 36L25.790 22.500H10.210Z" fill="#2a9647" />
      <path d="M10.210 22.500L2.410 9A18 18 0 0 1 33.590 9H18Z" fill="#e33b2e" />
      <circle cx="18" cy="18" r="9" fill="#fff" />
      <circle cx="18" cy="18" r="7.100" fill="#3478ee" />
    </svg>
  );
}

function TerminalIcon() {
  return (
    <span className="relative flex">
      <svg width="34" height="28" viewBox="0 0 34 28">
        <rect x=".5" y=".5" width="33" height="27" rx="1" fill="#b9bec6" stroke="#868a92" />
        <path d="M24 1.700h1.500M27 1.700h1.500M30 1.700h1.500" stroke="#3a3d46" strokeWidth="1.200" />
        <rect x="2" y="3.200" width="30" height="22.600" fill="#000" />
        <path d="M2 3.200h30v6C20 9.500 10 12 2 18Z" fill="#4a4a4a" />
      </svg>
      <span className="absolute top-[4px] left-[3px] font-['Liberation_Mono'] text-[7px] leading-[8px] font-bold text-white">C:\_</span>
    </span>
  );
}

function TaskItem({ children, tile = "", bar = "" }: { children: ReactNode; tile?: string; bar?: string }) {
  return (
    <div className="flex h-full w-[66px] shrink-0 items-center justify-center">
      <div className={"relative flex items-center justify-center " + (tile || "h-[60px] w-[60px]")}>
        {children}
        {bar && <span className={"absolute rounded-full " + bar} />}
      </div>
    </div>
  );
}

function Taskbar() {
  return (
    <footer className="flex h-[72px] shrink-0 items-center border-t-2 border-[#a9bcbd] bg-[linear-gradient(to_right,#cce0e6_0,#c8eced_130px,#c9edee_500px,#d2eaec_680px,#e0e6e5_880px,#e2e6e4_1080px,#d5e8ea_1280px,#c9ecee_1450px,#c9ebed_1920px)] pb-[2px] text-[#1c1c1c]">
      <WeatherAlert />
      <WindowsLogo />
      <div className="ml-[20.500px] flex h-[48px] w-[329px] items-center rounded-full border-2 border-[#c3dfe1] border-b-[#aac6c8] bg-[#f0fafb]">
        <svg className="ml-[14px]" width="24" height="24" viewBox="0 0 24 24" fill="none" stroke="#262626" strokeWidth="2.300">
          <circle cx="10.500" cy="10" r="8.300" fill="#e6eeee" />
          <path d="M16.500 16.500l5.800 6" strokeWidth="2.900" strokeLinecap="round" />
        </svg>
        <span className="ml-[14.500px] pt-px text-[20px] leading-7 tracking-[-0.050px] text-[#5b6162]">Search</span>
      </div>
      <div className="ml-[3.500px] flex h-full">
        <TaskItem><TaskViewIcon /></TaskItem>
        <TaskItem><SupportIcon /></TaskItem>
        <TaskItem><TeamsIcon /></TaskItem>
        <TaskItem><EdgeIcon /></TaskItem>
        <TaskItem><OutlookIcon /></TaskItem>
        <TaskItem><MyAsusIcon /></TaskItem>
        <TaskItem><StoreIcon /></TaskItem>
        <TaskItem bar="bottom-px h-[5px] w-[9px] bg-[#7d8686]"><ExplorerIcon /></TaskItem>
        <TaskItem tile="h-[60px] w-[60px] rounded-[6px] bg-[#e9aca9]" bar="bottom-px h-[5px] w-12 bg-[#c42b1c]"><FileArrowIcon /></TaskItem>
        <TaskItem bar="bottom-px h-[5px] w-[9px] bg-[#7d8686]"><JupyterArcs dots /></TaskItem>
        <TaskItem tile="h-[57px] w-[57px] rounded-[6px] border border-[#d3e2e3] bg-[#e9f5f7]" bar="-bottom-[1.500px] h-[5px] w-6 bg-[#258292]"><ChromeIcon /></TaskItem>
        <TaskItem bar="bottom-px h-[5px] w-[9px] bg-[#7d8686]"><TerminalIcon /></TaskItem>
      </div>

      <div className="ml-auto flex h-full items-center pr-[29px]">
        <svg width="18" height="12" viewBox="0 0 18 12" fill="none" stroke="#1c1c1c" strokeWidth="2">
          <path d="M1.500 10L9 2.500l7.500 7.500" strokeLinecap="round" />
        </svg>
        <div className="ml-[27px] w-[40px] text-center text-[18px] leading-[23px]">
          <div>ENG</div>
          <div>IN</div>
        </div>
        <svg className="ml-[24px]" width="26" height="20" viewBox="0 0 26 20" fill="none" strokeWidth="1.800">
          <path d="M1.500 7.500a16 16 0 0 1 23 0" stroke="#a3bcbe" />
          <path d="M4.500 11a12 12 0 0 1 17 0" stroke="#8aa2a4" />
          <path d="M7.500 14a7.800 7.800 0 0 1 11 0" stroke="#1c1c1c" />
          <circle cx="13" cy="16.800" r="2.200" fill="#1c1c1c" />
        </svg>
        <svg className="ml-[10px]" width="26" height="22" viewBox="0 0 26 22" fill="none" stroke="#1c1c1c" strokeWidth="1.600">
          <path d="M1.800 7.800h3.600L10.500 3v16l-5.100-4.800H1.800Z" strokeLinejoin="round" />
          <path d="M13.800 7.500c1.600 2 1.600 5 0 7M17.200 5c3 3.500 3 8.500 0 12M20.800 2c4.500 5 4.500 13 0 18" strokeLinecap="round" />
        </svg>
        <svg className="ml-[10px]" width="26" height="17" viewBox="0 0 26 17">
          <rect x="1.500" y="1.500" width="20" height="14" rx="3.500" fill="none" stroke="#1c1c1c" strokeWidth="1.800" />
          <rect x="4.300" y="4.300" width="10.500" height="8.400" rx="1" fill="#1c1c1c" />
          <path d="M22.500 5.500c2 0 3 1.500 3 3s-1 3-3 3Z" fill="#1c1c1c" />
        </svg>
        <div className="ml-[23px] text-right text-[18px] leading-[24px] tracking-[-0.030px]">
          <div>16:43</div>
          <div>19-07-2025</div>
        </div>
      </div>
    </footer>
  );
}

export default function App() {
  return (
    <div className="flex h-[1080px] w-[1920px] flex-col overflow-hidden bg-white font-['Open_Sans',sans-serif]">
      <TabStrip />
      <Toolbar />
      <div className="h-px shrink-0 bg-[#dcdfe0]" />
      <div className="h-px shrink-0 bg-white" />
      <div className="h-[3px] shrink-0 bg-[linear-gradient(to_right,#ff4b4b,#fffd80)]" />
      <div className="flex h-[874px] shrink-0 font-['Noto_Sans_CJK_SC',sans-serif]">
        <Sidebar />
        <Page />
        <Scrollbar />
      </div>
      <Taskbar />
    </div>
  );
}
